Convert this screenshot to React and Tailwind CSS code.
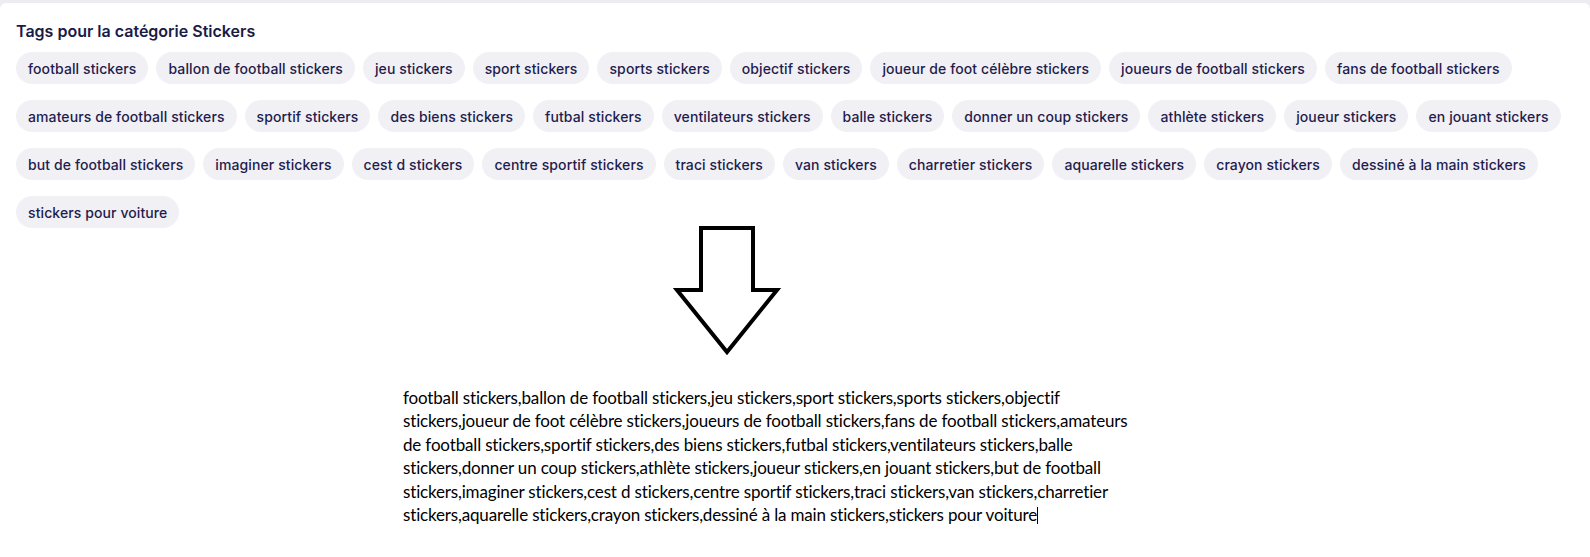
const tags = [
  "football stickers",
  "ballon de football stickers",
  "jeu stickers",
  "sport stickers",
  "sports stickers",
  "objectif stickers",
  "joueur de foot célèbre stickers",
  "joueurs de football stickers",
  "fans de football stickers",
  "amateurs de football stickers",
  "sportif stickers",
  "des biens stickers",
  "futbal stickers",
  "ventilateurs stickers",
  "balle stickers",
  "donner un coup stickers",
  "athlète stickers",
  "joueur stickers",
  "en jouant stickers",
  "but de football stickers",
  "imaginer stickers",
  "cest d stickers",
  "centre sportif stickers",
  "traci stickers",
  "van stickers",
  "charretier stickers",
  "aquarelle stickers",
  "crayon stickers",
  "dessiné à la main stickers",
  "stickers pour voiture",
];

// same list as one comma string, broken like the editor wraps it
const lines = [
  "football stickers,ballon de football stickers,jeu stickers,sport stickers,sports stickers,objectif",
  "stickers,joueur de foot célèbre stickers,joueurs de football stickers,fans de football stickers,amateurs",
  "de football stickers,sportif stickers,des biens stickers,futbal stickers,ventilateurs stickers,balle",
  "stickers,donner un coup stickers,athlète stickers,joueur stickers,en jouant stickers,but de football",
  "stickers,imaginer stickers,cest d stickers,centre sportif stickers,traci stickers,van stickers,charretier",
  "stickers,aquarelle stickers,crayon stickers,dessiné à la main stickers,stickers pour voiture",
];

const DownArrow = () => (
  <svg width="124" height="140" viewBox="0 0 124 140" className="block">
    <path
      d="M41 8 L93 8 L93 70 L117 70 L67 132 L17 70 L41 70 Z"
      fill="white"
      stroke="black"
      strokeWidth="4"
      strokeLinejoin="miter"
    />
  </svg>
);

export default function App() {
  return (
    <div className="min-h-[557px] bg-[#ececf1] pt-[3px]">
      <div className="min-h-[554px] bg-white rounded-t-md">
        {/* Tags card */}
        <div className="px-4 pt-[17px] font-['Inter',sans-serif]">
          <h2 className="text-[16px] leading-[22px] font-semibold text-[#1b1a46] mb-[10px]">
            Tags pour la catégorie Stickers
          </h2>
          <div className="flex flex-wrap gap-x-2 gap-y-4">
            {tags.map((tag) => (
              <span
                key={tag}
                className="h-8 px-3 flex items-center rounded-full bg-[#f1f0f5] text-[14px] font-medium tracking-[0.1px] text-[#1f1d4d] whitespace-nowrap"
              >
                {tag}
              </span>
            ))}
          </div>
        </div>

        {/* Arrow */}
        <div className="pl-[660px] mt-[-8px]">
          <DownArrow />
        </div>

        {/* Plain text result */}
        <div className="pl-[403px] mt-[26px] font-['Lato',sans-serif] text-[17px] tracking-[-0.16px] leading-[23.4px] text-black">
          {lines.map((line, i) => (
            <div key={i} className="whitespace-nowrap">
              {line}
              {i === lines.length - 1 && (
                <span className="inline-block w-px h-[17px] bg-black align-[-3px]" />
              )}
            </div>
          ))}
        </div>
      </div>
    </div>
  );
}
